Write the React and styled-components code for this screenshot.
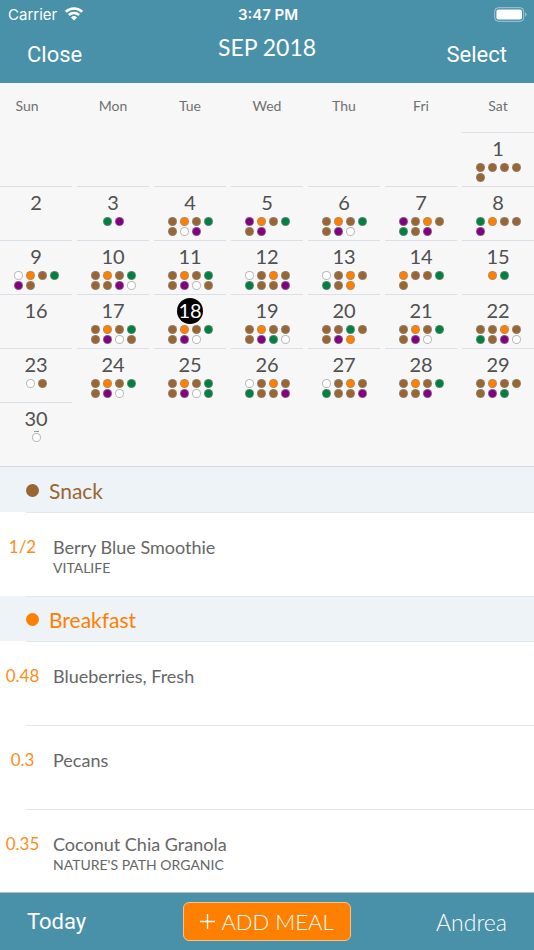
import React from 'react';
import styled, { createGlobalStyle } from 'styled-components';

const GlobalStyle = createGlobalStyle`
  *,
  *::before,
  *::after {
    box-sizing: border-box;
  }

  body {
    margin: 0;
    background: #fff;
    font-family: Lato, 'Open Sans', sans-serif;
    color: #505050;
  }

  h1,
  h2,
  p,
  ul {
    margin: 0;
    padding: 0;
  }

  ul {
    list-style: none;
  }

  button {
    margin: 0;
    padding: 0;
    border: 0;
    background: none;
    color: inherit;
    font: inherit;
    cursor: pointer;
  }
`;

const COLORS = {
  b: '#996633',
  o: '#ff8000',
  g: '#008040',
  p: '#800080',
  w: '#ffffff',
};

const WEEKDAYS = ['Sun', 'Mon', 'Tue', 'Wed', 'Thu', 'Fri', 'Sat'];

// One letter per logged meal, keyed into COLORS. The index is the day minus one.
const MEALS = [
  'bbbbb',
  '',
  'gp',
  'bobgbwp',
  'pobgbp',
  'bobgbpw',
  'pbobgbp',
  'gobbp',
  'wobgpb',
  'bobgbbpw',
  'bobgbpwb',
  'wbobgbbp',
  'wbobgbo',
  'obbgb',
  'og',
  '',
  'bobgbpwb',
  'bobgbpw',
  'bobbbpgw',
  'bbgbbpo',
  'bobgbpw',
  'bbobgbpw',
  'wb',
  'bobgbpw',
  'bobgbpwg',
  'wbobgbbp',
  'wbobgbbp',
  'bobgbbp',
  'bobbbpg',
  'w',
];

const SECTIONS = [
  {
    title: 'Snack',
    color: COLORS.b,
    foods: [{ amount: '1/2', name: 'Berry Blue Smoothie', brand: 'VITALIFE' }],
  },
  {
    title: 'Breakfast',
    color: COLORS.o,
    foods: [
      { amount: '0.48', name: 'Blueberries, Fresh' },
      { amount: '0.3', name: 'Pecans' },
      {
        amount: '0.35',
        name: 'Coconut Chia Granola',
        brand: "NATURE'S PATH ORGANIC",
      },
    ],
  },
];

const Page = styled.div`
  display: flex;
  flex-direction: column;
  min-height: 100vh;
`;

const Header = styled.header`
  background: #4990a9;
  color: #fff;
`;

const StatusBar = styled.div`
  display: grid;
  grid-template-columns: 1fr auto 1fr;
  align-items: center;
  height: 28px;
  padding: 0 6px 0 8px;
  font-family: Inter, sans-serif;
  font-size: 15px;
`;

const Carrier = styled.span`
  display: flex;
  align-items: center;
  gap: 8px;
`;

const Clock = styled.span`
  font-weight: 600;
`;

const Battery = styled.svg`
  justify-self: end;
`;

const NavBar = styled.div`
  display: grid;
  grid-template-columns: 1fr auto 1fr;
  height: 55px;
  padding: 0 27px 2px;

  h1 {
    padding-top: 4px;
    font-size: 23px;
    font-weight: 400;
    line-height: 30px;
  }
`;

const BarButton = styled.button`
  justify-self: ${({ $end }) => ($end ? 'end' : 'start')};
  font-family: ${({ $light }) =>
    $light ? 'Lato, sans-serif' : 'Roboto, sans-serif'};
  font-size: ${({ $light }) => ($light ? 23 : 22)}px;
  font-weight: ${({ $light }) => ($light ? 300 : 400)};
`;

const Calendar = styled.section`
  padding-bottom: 10px;
  background: #f7f7f7;
  border-bottom: 1px solid #d3d9de;
`;

const Weekdays = styled.div`
  display: grid;
  grid-template-columns: repeat(7, 1fr);
  column-gap: 5px;
  height: 49px;
  color: #707070;
  line-height: 46px;
  font-size: 14px;
  text-align: center;

  span:first-child {
    padding-right: 18px;
  }
`;

const Days = styled.div`
  display: grid;
  grid-template-columns: repeat(7, 1fr);
  grid-auto-rows: 54px;
  column-gap: 5px;
`;

const Day = styled.button`
  display: flex;
  flex-direction: column;
  align-items: center;
  justify-content: flex-start;
  border-top: 1px solid #dcdfe8;

  &:first-child {
    grid-column-start: 7;
  }
`;

const DayNumber = styled.span`
  width: 26px;
  height: 26px;
  margin: 3px 0 1px;
  border-radius: 50%;
  background: ${({ $selected }) => ($selected ? '#000' : 'none')};
  color: ${({ $selected }) => ($selected ? '#fff' : 'inherit')};
  font-size: 20px;
  line-height: 24px;
`;

const Dots = styled.span`
  display: grid;
  grid-template-columns: repeat(${({ $columns }) => $columns}, 9px);
  gap: 1px 3px;
`;

const Dot = styled.span`
  position: relative;
  width: 9px;
  height: 9px;
  border: 1px solid rgba(140, 140, 140, 0.6);
  border-radius: 50%;
  background: ${({ $color }) => $color};
`;

const Dash = styled.span`
  position: absolute;
  top: -3px;
  left: 1px;
  width: 5px;
  height: 1px;
  background: #999;
`;

const Meals = styled.main`
  flex: 1;
`;

// The hairline starts at the list inset while the background runs full width.
const Line = styled.div`
  position: relative;

  &::before {
    content: '';
    position: absolute;
    top: 0;
    right: 0;
    left: 26px;
    height: 1px;
    background: #e3e7e9;
  }
`;

const SectionTitle = styled(Line)`
  display: flex;
  align-items: center;
  gap: 10px;
  height: 45px;
  padding: 2px 26px 0;
  background: #edf3f6;
  color: ${({ $color }) => $color};

  section:first-child > &::before {
    display: none;
  }

  h2 {
    font-size: 21px;
    font-weight: 400;
    line-height: 28px;
  }
`;

const Bullet = styled.span`
  width: 13px;
  height: 13px;
  border-radius: 50%;
  background: currentColor;
`;

const Food = styled(Line)`
  display: grid;
  grid-template-columns: 45px 1fr;
  column-gap: 8px;
  height: 84px;
  padding-top: 23px;
  background: #fff;
`;

const Amount = styled.span`
  color: #ff8c1a;
  font-size: 17px;
  line-height: 24px;
  text-align: center;
`;

const FoodName = styled.p`
  color: #666;
  font-size: 18px;
  line-height: 24px;
`;

const Brand = styled.p`
  color: #666;
  font-size: 14px;
  line-height: 18px;
`;

const Footer = styled.footer`
  position: sticky;
  bottom: 0;
  display: grid;
  grid-template-columns: 1fr auto 1fr;
  align-items: center;
  height: 57px;
  padding: 0 27px;
  background: #4990a9;
  box-shadow: 0 -1px #b7bdc0;
  color: #fff;
`;

const AddButton = styled.button`
  display: flex;
  align-items: center;
  gap: 6px;
  height: 39px;
  padding: 0 16px;
  border: 1px solid #f5c48c;
  border-radius: 6px;
  background: #ff8000;
  font-size: 22px;
  font-weight: 300;
`;

const DayCell = ({ day, meals, selected }) => (
  <Day aria-pressed={selected} aria-label={`September ${day}`}>
    <DayNumber $selected={selected}>{day}</DayNumber>
    <Dots $columns={Math.min(meals.length, 4) || 1}>
      {[...meals].map((meal, index) => (
        <Dot key={index} $color={COLORS[meal]}>
          {meals.length === 1 && <Dash />}
        </Dot>
      ))}
    </Dots>
  </Day>
);

const App = () => (
  <Page>
    <GlobalStyle />
    <Header>
      <StatusBar>
        <Carrier>
          Carrier
          <svg width="18" height="14" viewBox="0 0 18 14" aria-hidden="true">
            <g fill="none" stroke="#fff" strokeWidth="2.5">
              <path d="M0.8 4.8a11.6 11.6 0 0 1 16.4 0" />
              <path d="M3.9 8a7.2 7.2 0 0 1 10.2 0" />
            </g>
            <path fill="#fff" d="M9 13.4 6 10.4a4.3 4.3 0 0 1 6 0z" />
          </svg>
        </Carrier>
        <Clock>3:47 PM</Clock>
        <Battery width="34" height="15" viewBox="0 0 34 15" aria-hidden="true">
          <rect
            x="0.7"
            y="0.7"
            width="29"
            height="13.6"
            rx="3.6"
            fill="none"
            stroke="#fff"
            strokeOpacity="0.5"
          />
          <rect x="2.4" y="2.4" width="25.6" height="10.2" rx="2" fill="#fff" />
          <path
            d="M31.2 5.2a2.6 2.6 0 0 1 0 4.6z"
            fill="#fff"
            fillOpacity="0.5"
          />
        </Battery>
      </StatusBar>
      <NavBar>
        <BarButton>Close</BarButton>
        <h1>SEP 2018</h1>
        <BarButton $end>Select</BarButton>
      </NavBar>
    </Header>

    <Calendar>
      <Weekdays>
        {WEEKDAYS.map((weekday) => (
          <span key={weekday}>{weekday}</span>
        ))}
      </Weekdays>
      <Days>
        {MEALS.map((meals, index) => (
          <DayCell
            key={index}
            day={index + 1}
            meals={meals}
            selected={index + 1 === 18}
          />
        ))}
      </Days>
    </Calendar>

    <Meals>
      {SECTIONS.map(({ title, color, foods }) => (
        <section key={title}>
          <SectionTitle $color={color}>
            <Bullet />
            <h2>{title}</h2>
          </SectionTitle>
          <ul>
            {foods.map(({ amount, name, brand }) => (
              <Food as="li" key={name}>
                <Amount>{amount}</Amount>
                <div>
                  <FoodName>{name}</FoodName>
                  {brand && <Brand>{brand}</Brand>}
                </div>
              </Food>
            ))}
          </ul>
        </section>
      ))}
    </Meals>

    <Footer>
      <BarButton>Today</BarButton>
      <AddButton>
        <svg width="15" height="15" viewBox="0 0 15 15" aria-hidden="true">
          <path d="M7.5 0v15M0 7.5h15" stroke="#fff" strokeWidth="1.3" />
        </svg>
        ADD MEAL
      </AddButton>
      <BarButton $end $light>
        Andrea
      </BarButton>
    </Footer>
  </Page>
);

export default App;
